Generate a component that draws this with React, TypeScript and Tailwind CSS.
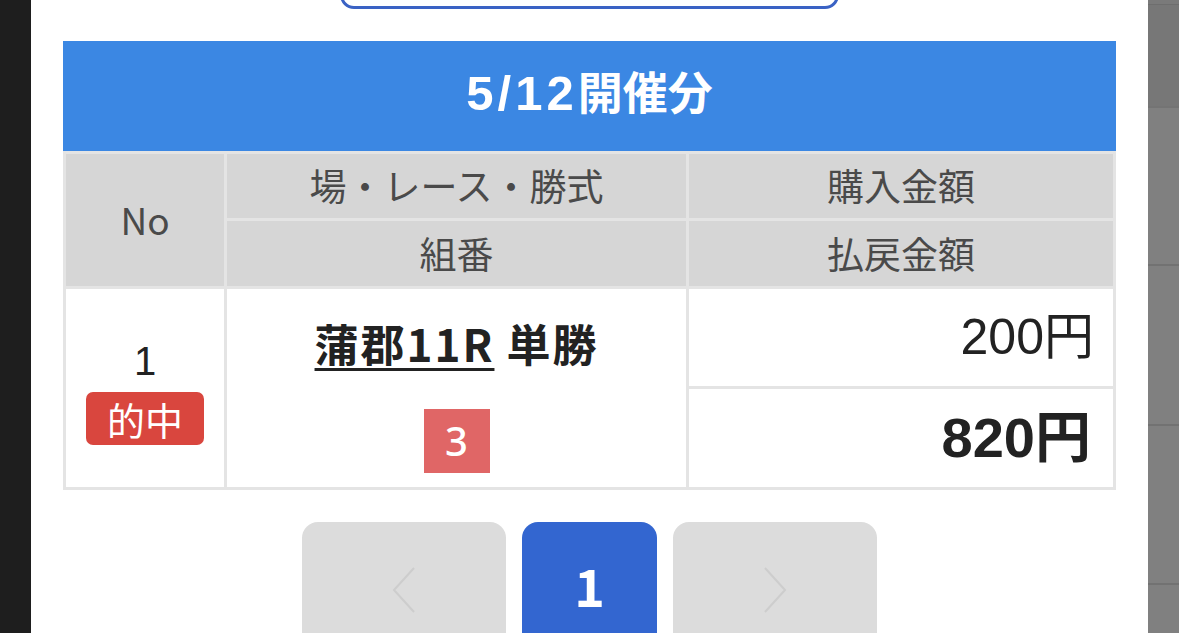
import React from 'react'

const jp = '[font-family:"Noto_Sans_CJK_JP","Noto_Sans",sans-serif]'
const num = '[font-family:"Liberation_Sans","Noto_Sans_CJK_JP",sans-serif]'

function Chevron({ dir }: { dir: 'left' | 'right' }) {
  return (
    <svg width="24" height="46" viewBox="0 0 24 46" fill="none">
      <path
        d={dir === 'left' ? 'M22 1 L2 23 L22 45' : 'M2 1 L22 23 L2 45'}
        stroke="#cdcdcd"
        strokeWidth="2"
      />
    </svg>
  )
}

export default function App() {
  const bet = {
    no: 1,
    place: '蒲郡11R',
    type: '単勝',
    combo: '3',
    amount: '200円',
    payout: '820円',
  }

  return (
    <div className={`flex h-[633px] overflow-hidden ${jp}`}>
      {/* left edge */}
      <div className="w-[31px] shrink-0 bg-[#1e1e1e]" />

      {/* modal body */}
      <div className="flex-1 bg-white px-[32px]">
        {/* button cut off at the top */}
        <div className="flex justify-center">
          <div className="-mt-[40px] h-[49px] w-[499px] rounded-[14px] border-[3px] border-[#3a62c4]" />
        </div>

        <div className="mt-[32px] flex h-[110px] items-center justify-center bg-[#3b87e3] pb-[4px]">
          <h2 className="text-[45px] font-bold text-white">
            <span className={`text-[49px] tracking-[4px] ${num}`}>5/12</span>開催分
          </h2>
        </div>

        {/* result table */}
        <div className="grid grid-cols-[158px_459px_424px] grid-rows-[64px_65px_97px_98px] gap-[3px] bg-[#e4e4e4] p-[3px] text-[37px]">
          <div className="row-span-2 flex items-center justify-center bg-[#d6d6d6] text-[#4a4a4a]">No</div>
          <div className="flex items-center justify-center bg-[#d6d6d6] text-[#4a4a4a]">場・レース・勝式</div>
          <div className="flex items-center justify-center bg-[#d6d6d6] text-[#4a4a4a]">購入金額</div>
          <div className="flex items-center justify-center bg-[#d6d6d6] text-[#4a4a4a]">組番</div>
          <div className="flex items-center justify-center bg-[#d6d6d6] text-[#4a4a4a]">払戻金額</div>

          <div className="row-span-2 flex flex-col items-center bg-white pt-[42px]">
            <span className={`text-[40px] leading-[60px] text-[#222] ${num}`}>{bet.no}</span>
            <span className="mt-[1px] flex h-[53px] w-[118px] items-center justify-center rounded-[7px] bg-[#d9463e] text-[38px] text-white">
              的中
            </span>
          </div>
          <div className="row-span-2 flex flex-col items-center bg-white pt-[20px]">
            <div className="text-[44px] font-bold leading-[68px] tracking-[2px] text-[#222]">
              <span className="underline decoration-[3px] underline-offset-[6px]">{bet.place}</span> {bet.type}
            </div>
            <span className="mt-[32px] flex h-[64px] w-[66px] items-center justify-center bg-[#e06666] text-[40px] font-medium text-white [font-family:'Noto_Sans',sans-serif]">
              {bet.combo}
            </span>
          </div>
          <div className={`flex items-center justify-end bg-white pr-[19px] text-[50px] text-[#222] ${num}`}>
            {bet.amount}
          </div>
          <div className={`flex items-center justify-end bg-white pr-[22px] text-[56px] font-bold text-[#222] ${num}`}>
            {bet.payout}
          </div>
        </div>

        {/* pager */}
        <div className="mt-[32px] flex justify-center gap-[16px]">
          <button className="flex h-[140px] w-[204px] items-start justify-center rounded-t-[16px] bg-[#dcdcdc] pt-[45px]">
            <Chevron dir="left" />
          </button>
          <button className="flex h-[140px] w-[135px] items-start justify-center rounded-t-[16px] bg-[#3366d0] pt-[30px] text-[52px] font-bold leading-[66px] text-white">
            1
          </button>
          <button className="flex h-[140px] w-[204px] items-start justify-center rounded-t-[16px] bg-[#dcdcdc] pt-[45px]">
            <Chevron dir="right" />
          </button>
        </div>
      </div>

      {/* right edge: page behind */}
      <div className="flex w-[31px] shrink-0 flex-col bg-[#808080]">
        <div className="h-[4px] bg-[#7a7a7a]" />
        <div className="h-[102px] border-t border-[#6e6e6e] bg-[#777777]" />
        <div className="h-[158px] border-t-2 border-[#747474]" />
        <div className="h-[160px] border-t-2 border-[#727272]" />
        <div className="h-[159px] border-t-2 border-[#727272]" />
        <div className="flex-1 border-t-2 border-[#727272]" />
      </div>
    </div>
  )
}
